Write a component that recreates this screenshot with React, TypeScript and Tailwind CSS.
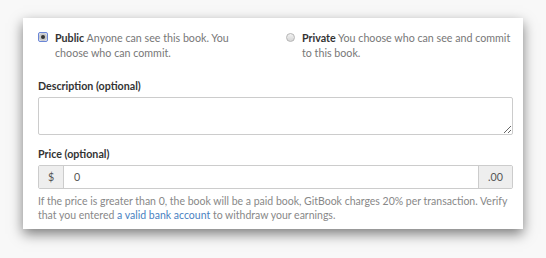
import React from "react";

export default function App() {
  const font = { fontFamily: "Lato, 'Open Sans', sans-serif" };
  return (
    <div className="w-[546px] h-[258px] bg-[#f8f8f8] pt-[18px] pl-[23px]" style={font}>
      <div className="w-[500px] h-[211px] bg-white shadow-[0_5px_12px_rgba(0,0,0,0.5)] pl-[15px] pr-[10px] pt-[12px]">
        <div className="grid grid-cols-[229px_1fr] gap-x-[19px] text-[10.7px] leading-[15px] text-[#777]">
          <div className="flex items-start gap-[7px]">
            <span className="mt-[2px] w-[10px] h-[10px] shrink-0 border border-[#6b86d6] rounded-[2px] flex items-center justify-center bg-[#dfe6f7]">
              <span className="w-[8px] h-[8px] rounded-full bg-[#c9c9c9] flex items-center justify-center">
                <span className="w-[4px] h-[4px] rounded-full bg-[#333]" />
              </span>
            </span>
            <p className="pr-[30px]">
              <span className="font-bold text-[#333]">Public</span> Anyone can see this book. You choose who can commit.
            </p>
          </div>
          <div className="flex items-start gap-[7px]">
            <span className="mt-[3px] w-[9px] h-[9px] shrink-0 rounded-full border border-[#b5b5b5] bg-gradient-to-b from-[#f2f2f2] to-[#d6d6d6]" />
            <p>
              <span className="font-bold text-[#333]">Private</span> You choose who can see and commit to this book.
            </p>
          </div>
        </div>
        <div className="mt-[18px] text-[10.7px] font-bold leading-[15px] text-[#333]">Description (optional)</div>
        <textarea className="mt-[4px] block w-full h-[38px] border border-[#ccc] rounded-[2px] resize-y" />
        <div className="mt-[11px] text-[10.7px] font-bold leading-[15px] text-[#333]">Price (optional)</div>
        <div className="mt-[4px] flex h-[24px] border border-[#ccc] rounded-[2px] text-[10.7px] text-[#555]">
          <span className="w-[25px] bg-[#eee] border-r border-[#ccc] flex items-center justify-center">$</span>
          <span className="flex-1 flex items-center pl-[10px]">0</span>
          <span className="w-[34px] bg-[#eee] border-l border-[#ccc] flex items-center justify-center">.00</span>
        </div>
        <p className="mt-[5px] text-[10.5px] leading-[14px] text-[#888]">
          If the price is greater than 0, the book will be a paid book, GitBook charges 20% per transaction. Verify that you entered{" "}
          <span className="text-[#4a7fc1]">a valid bank account</span> to withdraw your earnings.
        </p>
      </div>
    </div>
  );
}
